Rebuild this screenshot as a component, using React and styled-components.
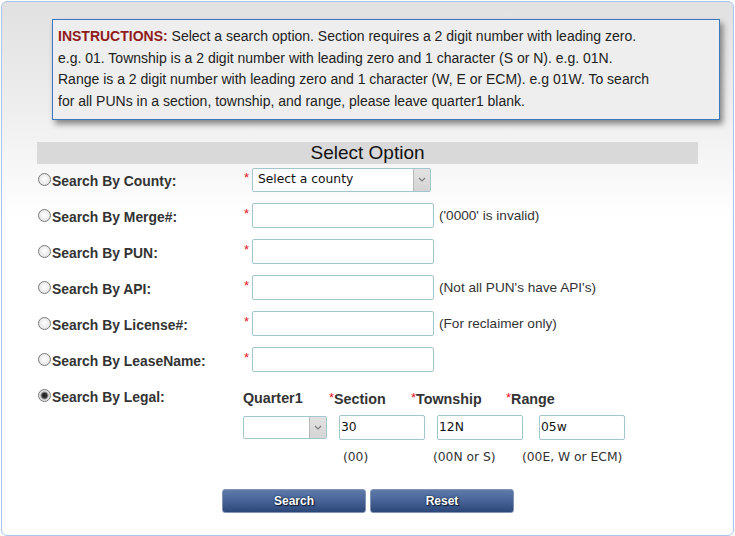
import React from "react";
import styled, { createGlobalStyle, css } from "styled-components";

const GlobalStyle = createGlobalStyle`
  html, body { margin: 0; padding: 0; background: #fff; }
  body { font-family: "Liberation Sans", Arial, sans-serif; }
  * { box-sizing: border-box; }
`;

const Page = styled.div`
  margin: 1px;
  width: 733px;
  height: 535px;
  border: 1px solid #a9c5ef;
  border-radius: 6px;
  background: linear-gradient(to bottom, #e1e1e1 0px, #ececec 90px, #f7f7f7 170px, #ffffff 215px);
  padding-top: 17px;
  overflow: hidden;
`;

const InstructionBox = styled.div`
  margin-left: 50px;
  width: 668px;
  border: 1px solid #3b78bf;
  background: #eeeeee;
  box-shadow: 3px 4px 6px rgba(0, 0, 0, 0.45);
  padding: 6px 5px;
  font-size: 14px;
  line-height: 21.7px;
  color: #222;
  white-space: nowrap;
`;

const Strong = styled.span`
  color: #8e1c1c;
  font-weight: bold;
`;

const Heading = styled.div`
  margin: 22px 0 0 35px;
  width: 661px;
  height: 22px;
  background: #d9d9d9;
  color: #111;
  font-size: 19px;
  line-height: 22px;
  text-align: center;
`;

const Form = styled.form`
  margin: -2px 0 0 36px;
`;

const Row = styled.div`
  display: grid;
  grid-template-columns: 205px 9px auto;
  align-items: ${(p) => (p.$top ? "start" : "center")};
  height: ${(p) => (p.$top ? "auto" : "36px")};
`;

const LabelCell = styled.label`
  display: flex;
  align-items: center;
  height: 36px;
  font-size: 13.9px;
  font-weight: bold;
  color: #333;
`;

const LabelText = styled.span`
  padding-top: 3px;
`;

const Radio = styled.input.attrs({ type: "radio", name: "searchby" })`
  appearance: none;
  -webkit-appearance: none;
  width: 13px;
  height: 13px;
  margin: 0 1px 0 0;
  border: 1px solid #7a7a7a;
  border-radius: 50%;
  background: radial-gradient(circle at 50% 45%, #ffffff 0, #ececec 55%, #d3d3d3 100%);
  flex: none;
  &:checked {
    background: radial-gradient(circle at 50% 50%, #262626 0, #303030 2.4px, #7a7a7a 3.2px, #dedede 4.4px, #f0f0f0 100%);
  }
`;

const Star = styled.span`
  color: #e8161a;
  font-size: 13px;
  line-height: 13px;
  margin-top: -5px;
  padding-left: 1px;
`;

const Field = styled.div`
  display: flex;
  align-items: center;
`;

const fieldFont = css`
  font-family: "DejaVu Sans", Verdana, sans-serif;
  font-size: 12.3px;
  color: #111;
`;

const TextInput = styled.input.attrs({ type: "text" })`
  width: ${(p) => p.$w || 182}px;
  height: 25px;
  border: 1px solid #a3c5cd;
  border-radius: 2px;
  background: #fff;
  padding: 0 2px 0 1px;
  margin: 0;
  outline: none;
  ${fieldFont}
`;

const SelectBox = styled.div`
  display: flex;
  width: ${(p) => p.$w}px;
  height: ${(p) => p.$h}px;
  border: 1px solid #a3c5cd;
  border-radius: 2px;
  background: #fff;
  overflow: hidden;
`;

const NativeSelect = styled.select`
  appearance: none;
  -webkit-appearance: none;
  flex: 1;
  min-width: 0;
  border: none;
  background: transparent;
  padding: 0 0 2px 5px;
  outline: none;
  ${fieldFont}
`;

const ArrowBox = styled.div`
  width: 17px;
  flex: none;
  background: linear-gradient(#e2e2e2, #d4d4d4);
  border-left: 1px solid #b9b9b9;
  display: flex;
  align-items: center;
  justify-content: center;
`;

const Note = styled.span`
  margin-left: 5px;
  font-size: 13.6px;
  color: #333;
`;

const LegalGrid = styled.div`
  grid-column: 2 / 4;
  display: grid;
  grid-template-columns: 86px 82px 95px 140px;
  grid-auto-rows: auto;
  padding-top: 10px;
`;

const LegalLabel = styled.div`
  font-size: 14.3px;
  font-weight: bold;
  line-height: 20px;
  height: 20px;
  color: #333;
  white-space: nowrap;
`;

const LabelStar = styled.span`
  color: #e8161a;
  font-weight: normal;
  font-size: 13px;
  vertical-align: 2px;
`;

const LegalInputCell = styled.div`
  margin-top: 7px;
  padding-left: ${(p) => p.$offset || 0}px;
  display: flex;
  align-items: center;
  height: 25px;
`;

const Hint = styled.div`
  margin-top: 9px;
  padding-left: ${(p) => p.$offset || 0}px;
  line-height: 16px;
  height: 16px;
  white-space: nowrap;
  ${fieldFont}
  color: #333;
`;

const ButtonRow = styled.div`
  display: flex;
  justify-content: center;
  gap: 4px;
  width: 660px;
  margin-top: 24px;
`;

const Button = styled.button`
  width: 144px;
  height: 24px;
  border: 1px solid #8393b2;
  border-radius: 3px;
  background: linear-gradient(to bottom, #5d7aaa 0%, #4a659a 45%, #2b4677 100%);
  color: #fff;
  font-family: "Liberation Sans", Arial, sans-serif;
  font-size: 12px;
  font-weight: bold;
  text-shadow: 0 0 2px #0d1a33, 1px 1px 1px #0d1a33;
  padding: 0;
  cursor: pointer;
`;

const Chevron = () => (
  <svg width="8" height="5" viewBox="0 0 8 5">
    <path d="M1 1 L4 4 L7 1" fill="none" stroke="#7c7c7c" strokeWidth="1.1" />
  </svg>
);

const Select = ({ w, h, children }) => (
  <SelectBox $w={w} $h={h}>
    <NativeSelect defaultValue="">{children}</NativeSelect>
    <ArrowBox>
      <Chevron />
    </ArrowBox>
  </SelectBox>
);

const simpleRows = [
  { label: "Search By Merge#:", note: "('0000' is invalid)" },
  { label: "Search By PUN:" },
  { label: "Search By API:", note: "(Not all PUN's have API's)" },
  { label: "Search By License#:", note: "(For reclaimer only)" },
  { label: "Search By LeaseName:" },
];

export default function App() {
  return (
    <>
      <GlobalStyle />
      <Page>
        <InstructionBox>
          <Strong>INSTRUCTIONS:</Strong> Select a search option. Section requires a 2 digit number with leading zero.
          <br />
          e.g. 01. Township is a 2 digit number with leading zero and 1 character (S or N). e.g. 01N.
          <br />
          Range is a 2 digit number with leading zero and 1 character (W, E or ECM). e.g 01W. To search
          <br />
          for all PUNs in a section, township, and range, please leave quarter1 blank.
        </InstructionBox>
        <Heading>Select Option</Heading>
        <Form onSubmit={(e) => e.preventDefault()}>
          <Row>
            <LabelCell>
              <Radio />
              <LabelText>Search By County:</LabelText>
            </LabelCell>
            <Star>*</Star>
            <Field>
              <Select w={179} h={24}>
                <option value="">Select a county</option>
              </Select>
            </Field>
          </Row>
          {simpleRows.map((r) => (
            <Row key={r.label}>
              <LabelCell>
                <Radio />
                <LabelText>{r.label}</LabelText>
              </LabelCell>
              <Star>*</Star>
              <Field>
                <TextInput />
                {r.note && <Note>{r.note}</Note>}
              </Field>
            </Row>
          ))}
          <Row $top>
            <LabelCell>
              <Radio defaultChecked />
              <LabelText>Search By Legal:</LabelText>
            </LabelCell>
            <LegalGrid>
              <LegalLabel>Quarter1</LegalLabel>
              <LegalLabel>
                <LabelStar>*</LabelStar>Section
              </LegalLabel>
              <LegalLabel>
                <LabelStar>*</LabelStar>Township
              </LegalLabel>
              <LegalLabel>
                <LabelStar>*</LabelStar>Range
              </LegalLabel>

              <LegalInputCell>
                <Select w={84} h={23}>
                  <option value=""></option>
                </Select>
              </LegalInputCell>
              <LegalInputCell $offset={10}>
                <TextInput $w={86} defaultValue="30" />
              </LegalInputCell>
              <LegalInputCell $offset={26}>
                <TextInput $w={86} defaultValue="12N" />
              </LegalInputCell>
              <LegalInputCell $offset={33}>
                <TextInput $w={86} defaultValue="05w" />
              </LegalInputCell>

              <Hint />
              <Hint $offset={14}>(00)</Hint>
              <Hint $offset={22}>(00N or S)</Hint>
              <Hint $offset={16}>(00E, W or ECM)</Hint>
            </LegalGrid>
          </Row>
          <ButtonRow>
            <Button type="button">Search</Button>
            <Button type="button">Reset</Button>
          </ButtonRow>
        </Form>
      </Page>
    </>
  );
}
